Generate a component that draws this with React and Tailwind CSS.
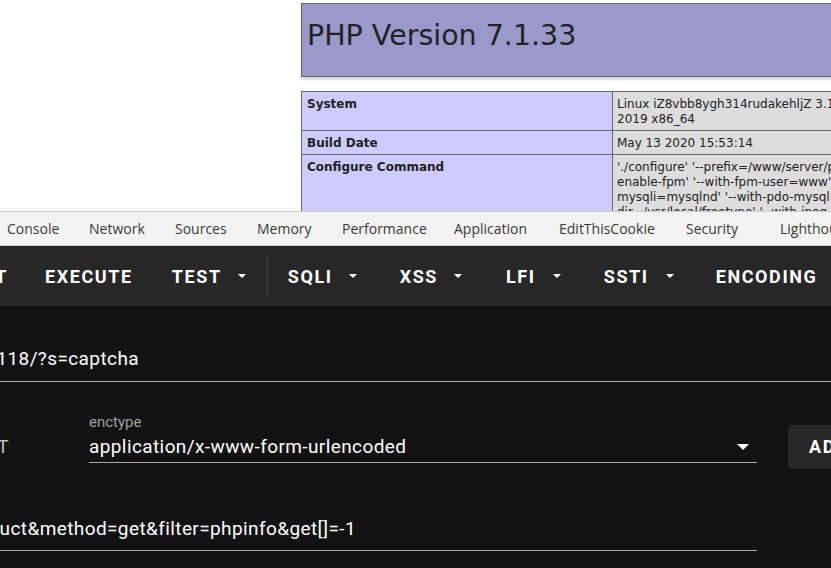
import React from "react";

const tabs = [
  { label: "Console", w: "w-[82px]" },
  { label: "Network", w: "w-[86px]" },
  { label: "Sources", w: "w-[82px]" },
  { label: "Memory", w: "w-[85px]" },
  { label: "Performance", w: "w-[112px]" },
  { label: "Application", w: "w-[105px]" },
  { label: "EditThisCookie", w: "w-[127px]" },
  { label: "Security", w: "w-[94px]" },
  { label: "Lighthouse", w: "w-[100px]" },
];

function Caret({ className }) {
  return (
    <svg className={className} width="8" height="4" viewBox="0 0 8 4">
      <polygon points="0,0 8,0 4,4" fill="#fff" />
    </svg>
  );
}

export default function App() {
  return (
    <div className="w-[831px] h-[568px] overflow-hidden bg-white">
      {/* phpinfo page */}
      <div className="h-[211px] overflow-hidden pl-[301px] pt-[3px] font-['DejaVu_Sans',sans-serif] text-[#222] text-[12px] leading-[15px]">
        <div className="w-[934px] h-[74px] border border-[#666] bg-[#99c] shadow-[1px_2px_3px_#ccc] pl-[5px] pt-[15px]">
          <h1 className="text-[28.5px] leading-[33px] whitespace-nowrap">PHP Version 7.1.33</h1>
        </div>
        <table className="mt-[14px] w-[934px] table-fixed border-collapse">
          <tbody>
            <tr>
              <td className="w-[311px] border border-[#666] bg-[#ccf] px-[5px] pt-[5px] pb-[3px] align-top font-bold">System</td>
              <td className="border border-[#666] bg-[#ddd] px-[4px] pt-[5px] pb-[3px] align-top whitespace-nowrap">
                Linux iZ8vbb8ygh314rudakehljZ 3.10.0-957.21.3.el7.x86_64 #1 SMP Tue Jun 18 16:35:19 UTC
                <br />
                2019 x86_64
              </td>
            </tr>
            <tr>
              <td className="border border-[#666] bg-[#ccf] px-[5px] pt-[5px] pb-[3px] align-top font-bold">Build Date</td>
              <td className="border border-[#666] bg-[#ddd] px-[4px] pt-[5px] pb-[3px] align-top whitespace-nowrap">May 13 2020 15:53:14</td>
            </tr>
            <tr>
              <td className="border border-[#666] bg-[#ccf] px-[5px] pt-[5px] pb-[3px] align-top font-bold">Configure Command</td>
              <td className="border border-[#666] bg-[#ddd] px-[4px] pt-[5px] pb-[3px] align-top whitespace-nowrap">
                './configure' '--prefix=/www/server/php/71' '--with-config-file-path=/www/server/php/71/etc' '--
                <br />
                enable-fpm' '--with-fpm-user=www' '--with-fpm-group=www' '--enable-mysqlnd' '--with-
                <br />
                mysqli=mysqlnd' '--with-pdo-mysql=mysqlnd' '--with-iconv-dir' '--with-freetype-
                <br />
                dir=/usr/local/freetype' '--with-jpeg-dir' '--with-png-dir' '--with-zlib'
              </td>
            </tr>
          </tbody>
        </table>
      </div>

      {/* devtools tabs */}
      <div className="h-[35px] flex items-center pl-[7px] bg-[#f3f3f3] border-t border-b border-[#cbcbcb] font-['Open_Sans',sans-serif] text-[14px] text-[#3a3a3a] whitespace-nowrap">
        {tabs.map((t) => (
          <div key={t.label} className={`${t.w} shrink-0`}>
            {t.label}
          </div>
        ))}
      </div>

      {/* hackbar */}
      <div className="h-[322px] bg-[#121212] text-white font-['Roboto',sans-serif]">
        <div className="h-[60px] flex items-center bg-[#272727] text-[18px] font-bold tracking-[1.6px] whitespace-nowrap">
          <div className="w-[8px] shrink-0 flex justify-end">
            <span>SPLIT</span>
          </div>
          <span className="ml-[37px]">EXECUTE</span>
          <span className="ml-[39px]">TEST</span>
          <Caret className="ml-[16px] shrink-0" />
          <div className="ml-[21px] w-px h-[40px] bg-[#3d3d3d] shrink-0" />
          <span className="ml-[20px]">SQLI</span>
          <Caret className="ml-[16px] shrink-0" />
          <span className="ml-[43px]">XSS</span>
          <Caret className="ml-[16px] shrink-0" />
          <span className="ml-[44px]">LFI</span>
          <Caret className="ml-[17px] shrink-0" />
          <span className="ml-[43px]">SSTI</span>
          <Caret className="ml-[17px] shrink-0" />
          <span className="ml-[42px]">ENCODING</span>
        </div>

        <div className="pt-[41px] text-[19px] tracking-[0.4px] leading-6 whitespace-nowrap">
          <div className="border-b border-[#aaa] pb-[10px]">
            <div className="w-[139px] flex justify-end">
              <span>http://47.92.88.118/?s=captcha</span>
            </div>
          </div>

          <div className="mt-[32px] flex items-start">
            <div className="w-[9px] mt-[21px] shrink-0 flex justify-end text-[#bdbdbd]">
              <span>POST</span>
            </div>
            <div className="ml-[80px] w-[668px] shrink-0">
              <div className="text-[15px] tracking-normal leading-4 text-[#a0a0a0]">enctype</div>
              <div className="mt-[5px] flex items-center border-b border-[#aaa] pb-[3px]">
                <span>application/x-www-form-urlencoded</span>
                <svg className="ml-auto mr-[8px]" width="12" height="6" viewBox="0 0 12 6">
                  <polygon points="0,0 12,0 6,6" fill="#fff" />
                </svg>
              </div>
            </div>
            <button className="ml-[31px] mt-[11px] h-[44px] px-[21px] shrink-0 rounded bg-[#272727] text-[18px] font-bold tracking-[1.6px]">
              ADD HEADER
            </button>
          </div>

          <div className="mt-[48px] w-[757px] border-b border-[#aaa] pb-[9px]">
            <div className="w-[356px] flex justify-end">
              <span>_method=__construct&method=get&filter=phpinfo&get[]=-1</span>
            </div>
          </div>
        </div>
      </div>
    </div>
  );
}
